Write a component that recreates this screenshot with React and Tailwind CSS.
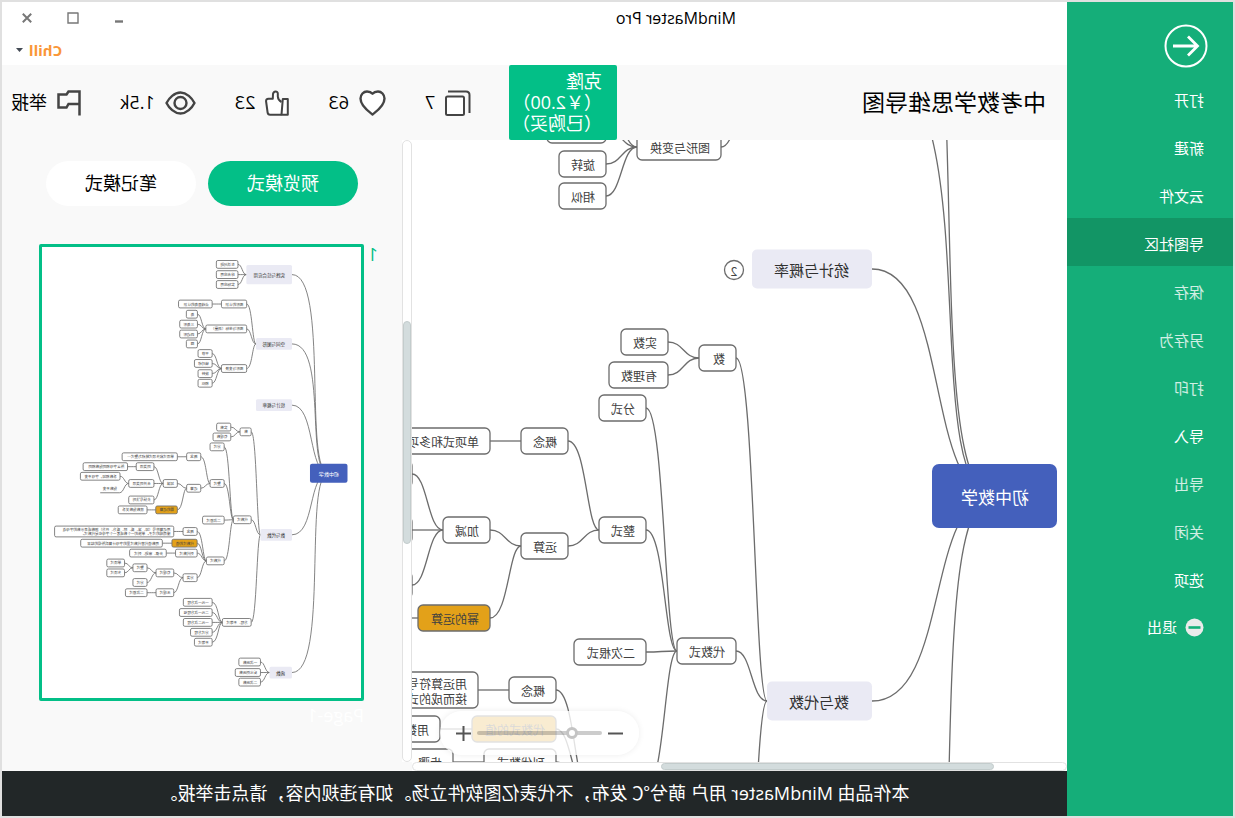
import React, { useLayoutEffect, useRef, useState } from 'react';

const UI_FONT = "font-['Open_Sans','Noto_Sans_CJK_SC',sans-serif]";

/* ---------- mind map data ---------- */
// x: left edge, y: vertical centre, both in map units
const node = (text, x, y, w, children = [], extra = {}) => ({ text, x, y, w, children, kind: 'leaf', ...extra });
const topic = (text, x, y, w, bend, children = [], extra = {}) =>
  node(text, x, y, w, children, { kind: 'topic', bend, ...extra });

const MAP = node('初中数学', 10, 356, 125, [
  topic('实践与综合应用', 195, -306, 152, [71, 158], [
    node('生活问题', 375, -340, 72),
    node('综合应用', 375, -306, 72),
    node('实际应用', 375, -273, 72),
  ], { h: 64 }),
  topic('空间与图形', 195, -75, 120, [75, 152], [
    node('图形的认识', 346, -208, 84, [node('点线面角的认识', 461, -208, 112)]),
    node('图形与坐标（测量）', 346, -125, 136, [
      node('角', 510, -174, 37),
      node('三角形', 510, -141, 59),
      node('四边形', 510, -108, 59),
      node('圆', 510, -75, 37),
    ]),
    node('图形与变换', 346, 7, 84, [
      node('平移', 461, -43, 47),
      node('轴对称', 461, -10, 59),
      node('旋转', 461, 24, 47),
      node('相似', 461, 56, 47),
    ]),
  ]),
  topic('统计与概率', 195, 129, 120, [117, 142], [], { folded: 2 }),
  topic('数与代数', 195, 561, 105, [117, 142], [
    node('数', 331, 218, 37, [
      node('实数', 399, 202, 47),
      node('有理数', 399, 235, 59),
    ]),
    node('代数式', 331, 511, 59, [
      node('分式', 421, 268, 47),
      node('整式', 421, 390, 47, [
        node('概念', 499, 301, 47, [node('单项式和多项式统称为整式…', 577, 301, 184)]),
        node('运算', 499, 406, 47, [
          node('加减', 577, 390, 47, [
            node('同类项', 655, 334, 59, [node('所含字母相同指数相同', 743, 334, 148)]),
            node('合并同类项', 655, 390, 84, [
              node('系数相加，字母不变', 768, 366, 132),
              node('指数不变', 770, 408, 64, [], { kind: 'line' }),
            ]),
            node('去括号法则', 655, 445, 84),
          ]),
          node('幂的运算', 577, 478, 72, [node('底数指数关系', 678, 478, 96)], { hot: true }),
        ]),
      ]),
      node('二次根式', 421, 512, 72),
      node('代数式', 421, 648, 59, [
        node('概念', 511, 550, 47, [
          node('用运算符号（加、减、乘、除、乘方、开方）把数或表示数的字母连', 589, 550, 397, [], {
            h: 36,
            second: '接而成的式子。单独的一个数或者一个字母也是代数式。',
          }),
        ]),
        node('代数式的值', 511, 589, 84, [node('用数值代替代数式里的字母计算后所得的结果', 627, 589, 272)], { hot: true }),
        node('列代数式', 511, 622, 72, [node('步骤、审题、列式', 614, 622, 122)]),
        node('分类', 511, 704, 47, [
          node('有理式', 589, 688, 59, [
            node('整式', 678, 671, 47, [
              node('单项式', 753, 655, 59),
              node('多项式', 753, 688, 59),
            ]),
            node('分式', 678, 720, 47),
          ]),
          node('无理式', 589, 754, 59, [node('二次根式', 678, 754, 72)]),
        ]),
      ]),
    ]),
    node('方程、不等式', 331, 853, 96, [
      node('一元一次方程', 461, 786, 96),
      node('二元一次方程组', 461, 820, 109),
      node('一元二次方程', 461, 853, 96),
      node('分式方程', 461, 886, 72),
      node('不等式', 461, 919, 59),
    ]),
  ]),
  topic('函数', 195, 1020, 75, [71, 158], [
    node('一次函数', 300, 985, 72),
    node('反比例函数', 300, 1020, 84),
    node('二次函数', 300, 1052, 72),
  ]),
], { kind: 'root' });

function edgePath(parent, child) {
  if (child.kind === 'topic') {
    const [a, b] = child.bend;
    return `M${child.x} ${child.y}C${a} ${child.y} ${b} ${parent.y} 73 ${parent.y}`;
  }
  const x0 = parent.x + parent.w;
  const y1 = child.kind === 'line' ? child.y + 13 : child.y;
  const far = Math.abs(y1 - parent.y) > 60 ? 0.6 : 0.5;
  const c = child.x - (child.x - x0) * far;
  return `M${child.x} ${y1}C${c} ${y1} ${c} ${parent.y} ${x0} ${parent.y}`;
}

const SHAPES = {
  root: { h: 64, r: 7, fill: '#4460bc', size: 17, pad: 28, color: '#ffffff' },
  topic: { h: 39, r: 5, fill: '#eaeaf4', size: 15, pad: 23, color: '#303030' },
  leaf: { h: 26, r: 5, fill: '#ffffff', size: 12, pad: 11, color: '#404040' },
  line: { h: 26, r: 0, fill: 'none', size: 12, pad: 8, color: '#404040' },
};

// Labels outside the visible area are skipped when a view is given
const inView = (item, view) =>
  !view || (item.x + 11 < view.w && item.y + 8 > 0 && item.y - 8 < view.h);

function Branch({ item, stroke, view, badges }) {
  const s = SHAPES[item.kind];
  const h = item.h || s.h;
  const boxed = item.kind === 'leaf';
  return (
    <>
      {item.children.map((c, i) => (
        <path key={i} d={edgePath(item, c)} fill="none" stroke="#6c6c6c" strokeWidth={stroke} />
      ))}
      {item.kind === 'line' ? (
        <path d={`M${item.x} ${item.y + 13}h${item.w}`} stroke="#6c6c6c" strokeWidth={stroke} />
      ) : (
        <rect
          x={item.x}
          y={item.y - h / 2}
          width={item.w}
          height={h}
          rx={s.r}
          fill={item.hot ? '#e3a119' : s.fill}
          stroke={boxed ? '#6c6c6c' : 'none'}
          strokeWidth={stroke}
        />
      )}
      {inView(item, view) && (
        <text
          x={item.x + s.pad}
          y={item.second ? item.y - 7 : item.y}
          fill={s.color}
          fontSize={s.size}
          dominantBaseline="central"
        >
          {item.text}
        </text>
      )}
      {item.second && inView(item, view) && (
        <text x={item.x + s.pad} y={item.y + 8} fill={s.color} fontSize={s.size} dominantBaseline="central">
          {item.second}
        </text>
      )}
      {badges && item.folded && (
        <>
          <circle cx={item.x + item.w + 18} cy={item.y + 1} r="9.500" fill="#fff" stroke="#6c6c6c" strokeWidth={stroke} />
          <text x={item.x + item.w + 18} y={item.y + 1} fontSize="12" fill="#444" textAnchor="middle" dominantBaseline="central">
            {item.folded}
          </text>
        </>
      )}
      {item.children.map((c, i) => (
        <Branch key={i} item={c} stroke={stroke} view={view} badges={badges} />
      ))}
    </>
  );
}

/* ---------- icons ---------- */
const ICON = { fill: 'none', stroke: '#444', strokeWidth: 2.4, 'aria-hidden': true };

const CopyIcon = () => (
  <svg width="26" height="26" viewBox="0 0 26 26" {...ICON} strokeWidth="2">
    <rect x="7" y="6.500" width="18" height="18.500" rx="1.5" fill="#fff" />
    <path d="M23 1.500H5C2.500 1.500 1.500 3 1.500 5v18" />
  </svg>
);
const HeartIcon = () => (
  <svg width="27" height="26" viewBox="0 0 27 26" {...ICON}>
    <path
      d="M13.5 24.5C11 22.5 1.5 16.5 1.5 8.6C1.5 4.4 4.6 1.5 8 1.5c2.400 0 4.400.9 5.500 2.200C14.600 2.400 16.600 1.500 19 1.500c3.400 0 6.500 2.900 6.500 7.100C25.500 16.500 16 22.500 13.500 24.500Z"
      fill="#fff"
      strokeLinejoin="round"
    />
  </svg>
);
const LikeIcon = () => (
  <svg width="24" height="26" viewBox="0 0 24 26" {...ICON} strokeWidth="2" strokeLinejoin="round">
    <path d="M7.500 12C9.500 11 11 9 11.200 6.500V3.500C11.200.8 15.500.6 16 4L16.200 8.800H20.500C22.200 8.800 23.200 9.800 22.900 11.500L21.400 22.500C21.200 23.900 20.400 24.700 19 24.700H7.500" fill="#fff" />
    <path d="M1.200 9H6.200L7.500 24.700H1.200Z" fill="#fff" />
  </svg>
);
const EyeIcon = () => (
  <svg width="31" height="24" viewBox="0 0 31 24" {...ICON} strokeLinejoin="round">
    <path d="M1.500 12C4 7 9.500 1.500 15.500 1.500S27 7 29.500 12C27 17 21.500 22.500 15.500 22.500S4 17 1.500 12Z" />
    <circle cx="15.500" cy="12" r="6" />
  </svg>
);
const FlagIcon = () => (
  <svg width="24" height="26" viewBox="0 0 24 26" {...ICON} strokeWidth="2.500">
    <path d="M1.500 25.500V1.500H12.500L14.500 4.500H22.500V17.500H14.500L12.500 14H1.500" />
  </svg>
);

/* ---------- parts ---------- */
const MENU = [
  { label: '打开' },
  { label: '新建' },
  { label: '云文件' },
  { label: '导图社区', current: true },
  { label: '保存', dim: true },
  { label: '另存为', dim: true },
  { label: '打印', dim: true },
  { label: '导入' },
  { label: '导出', dim: true },
  { label: '关闭', dim: true },
  { label: '选项' },
];

function Sidebar() {
  return (
    <nav className="flex w-[166px] shrink-0 flex-col bg-[#15ae79] pt-[22px] text-[15px] text-white">
      <button type="button" aria-label="返回" className="mb-1.5 ml-[25px] h-11 w-11">
        <svg width="44" height="44" viewBox="0 0 44 44" fill="none" stroke="#fff" aria-hidden="true">
          <circle cx="22" cy="22" r="20.5" strokeWidth="2" />
          <path d="M35 22H11M20 12.500L10.500 22L20 31.500" strokeWidth="2.800" />
        </svg>
      </button>
      {MENU.map((m) => (
        <button
          key={m.label}
          type="button"
          disabled={m.dim}
          className={`flex h-12 items-center pt-1 pl-[29px] text-left ${m.current ? 'bg-[#129565]' : ''} ${m.dim ? 'text-white/80' : ''}`}
        >
          {m.label}
        </button>
      ))}
      <button type="button" className="flex h-12 items-center gap-2 pt-0.5 pl-[29px]">
        <svg width="19" height="19" viewBox="0 0 19 19" aria-hidden="true">
          <circle cx="9.500" cy="9.500" r="9" fill="#ebebeb" />
          <path d="M3.500 9.500h12" stroke="#15ae79" strokeWidth="2.600" />
        </svg>
        退出
      </button>
    </nav>
  );
}

function TitleBar() {
  return (
    <header className="bg-white">
      <div className="flex h-8 items-center pr-5 pl-[331px] text-[16px] text-black">
        <h1>MindMaster Pro</h1>
        <div className="ml-auto flex items-center gap-[35px]">
          <button type="button" aria-label="最小化">
            <svg width="11" height="11" viewBox="0 0 11 11"><path d="M2 8.500h8" stroke="#777" strokeWidth="2.400" /></svg>
          </button>
          <button type="button" aria-label="最大化">
            <svg width="12" height="12" viewBox="0 0 12 12"><path d="M1 .5V11H11V1H1" fill="none" stroke="#777" strokeWidth="1.400" /></svg>
          </button>
          <button type="button" aria-label="关闭窗口">
            <svg width="10" height="10" viewBox="0 0 10 10"><path d="M.8.8l8.400 8.400M9.200.8L.8 9.200" stroke="#777" strokeWidth="2" /></svg>
          </button>
        </div>
      </div>
      <div className="flex h-[31px] items-center justify-end pr-3.5">
        <button type="button" className="flex items-center gap-1.5 text-[15px] leading-5 font-bold text-[#fa9638]">
          Chill
          <svg width="7" height="4" viewBox="0 0 7 4" aria-hidden="true"><path d="M0 0h7L3.500 4Z" fill="#444b55" /></svg>
        </button>
      </div>
    </header>
  );
}

const STATS = [
  { Icon: CopyIcon, value: '7', name: '克隆数' },
  { Icon: HeartIcon, value: '63', name: '收藏' },
  { Icon: LikeIcon, value: '23', name: '点赞' },
  { Icon: EyeIcon, value: '1.5k', name: '浏览' },
  { Icon: FlagIcon, value: '举报', name: '举报' },
];

function Toolbar() {
  return (
    <div className="flex h-[75px] items-center bg-[#f9f9f9] text-[18px] text-black">
      <h2 className="w-[282px] shrink-0 pl-[21px] text-[23px] whitespace-nowrap">中考数学思维导图</h2>
      <button
        type="button"
        className="ml-[168px] flex h-full w-[108px] shrink-0 flex-col items-start justify-center rounded-[2px] bg-[#03bf87] pl-[15px] leading-[21px] whitespace-nowrap text-white"
      >
        <span>克隆</span>
        <span>（￥2.00）</span>
        <span>（已购买）</span>
      </button>
      <div className="ml-auto flex items-center gap-[39px] pr-[9px]">
        {STATS.map(({ Icon, value, name }) => (
          <button key={name} type="button" aria-label={name} className="flex items-center gap-2.5 whitespace-nowrap">
            <Icon />
            <span>{value}</span>
          </button>
        ))}
      </div>
    </div>
  );
}

function ZoomControl() {
  return (
    <div className="absolute right-7 bottom-[7px] flex h-11 w-[199px] items-center justify-center gap-1.5 rounded-full bg-white/80 shadow-[0_0_6px_rgba(0,0,0,0.08)]">
      <button type="button" aria-label="缩小">
        <svg width="15" height="15" viewBox="0 0 15 15"><path d="M0 7.500h15" stroke="#555" strokeWidth="2" /></svg>
      </button>
      <input
        type="range"
        aria-label="缩放"
        min="0"
        max="100"
        defaultValue="21"
        className="h-1 w-[125px] appearance-none rounded-full bg-black/20 [&::-webkit-slider-thumb]:h-3 [&::-webkit-slider-thumb]:w-3 [&::-webkit-slider-thumb]:appearance-none [&::-webkit-slider-thumb]:rounded-full [&::-webkit-slider-thumb]:border-[3px] [&::-webkit-slider-thumb]:border-solid [&::-webkit-slider-thumb]:border-[#c4c4c4] [&::-webkit-slider-thumb]:bg-white"
      />
      <button type="button" aria-label="放大">
        <svg width="15" height="15" viewBox="0 0 15 15"><path d="M0 7.500h15M7.500 0v15" stroke="#555" strokeWidth="2" /></svg>
      </button>
    </div>
  );
}

function MapView() {
  const box = useRef(null);
  const [view, setView] = useState({ w: 0, h: 0 });
  useLayoutEffect(() => {
    const measure = () => setView({ w: box.current.clientWidth, h: box.current.clientHeight });
    measure();
    window.addEventListener('resize', measure);
    return () => window.removeEventListener('resize', measure);
  }, []);
  return (
    <div className="grid min-w-0 flex-1 grid-cols-[minmax(0,1fr)_10px] grid-rows-[minmax(0,1fr)_9px] bg-white">
      <div ref={box} className="relative overflow-hidden">
        <svg width="100%" height="100%" className="block font-['Noto_Sans_CJK_SC',sans-serif]">
          <Branch item={MAP} stroke={1.3} view={view} badges />
        </svg>
        <ZoomControl />
      </div>
      <div className="flex flex-col rounded-[5px] border border-[#e2e2e2] bg-white">
        <div className="h-[29%]" />
        <div className="h-[36%] rounded-[5px] border border-[#c3cccc] bg-[#d3dcdd]" />
      </div>
      <div className="flex rounded-[5px] border border-[#e2e2e2] bg-white">
        <div className="w-[11%]" />
        <div className="w-[51%] rounded-[5px] border border-[#c3cccc] bg-[#d3dcdd]" />
      </div>
      <div className="bg-[#f9f9f9]" />
    </div>
  );
}

function PagePanel() {
  return (
    <aside className="w-[400px] shrink-0 bg-[#f9f9f9] pt-[21px] text-[18px]">
      <div className="flex gap-3 pl-11">
        <button type="button" className="h-[45px] w-[150px] rounded-full bg-[#03bf87] text-white">预览模式</button>
        <button type="button" className="h-[45px] w-[150px] rounded-full bg-white text-black">笔记模式</button>
      </div>
      <div className="mt-[38px] flex pl-6">
        <span className="w-3.5 leading-5 text-[#03bf87]">1</span>
        <figure className="w-[325px]">
          <div className="rounded-[2px] border-[3px] border-[#03bf87] bg-white">
            <svg width="100%" viewBox="-35 -398 1063 1503" className="block font-['Noto_Sans_CJK_SC',sans-serif]">
              <Branch item={MAP} stroke={2.8} />
            </svg>
          </div>
          <figcaption className="pt-0.5 leading-6 text-white">Page-1</figcaption>
        </figure>
      </div>
    </aside>
  );
}

export default function App() {
  return (
    <div className={`flex h-screen -scale-x-100 overflow-hidden border-2 border-[#e0e0e0] bg-white ${UI_FONT}`}>
      <Sidebar />
      <main className="flex min-w-0 flex-1 flex-col">
        <TitleBar />
        <Toolbar />
        <div className="flex min-h-0 flex-1">
          <MapView />
          <PagePanel />
        </div>
        <footer className="flex h-[45px] shrink-0 items-center justify-center bg-[#222728] text-[18px] whitespace-nowrap text-white">
          本作品由 MindMaster 用户 萌兮℃ 发布，不代表亿图软件立场。如有违规内容，请点击举报。
        </footer>
      </main>
    </div>
  );
}
